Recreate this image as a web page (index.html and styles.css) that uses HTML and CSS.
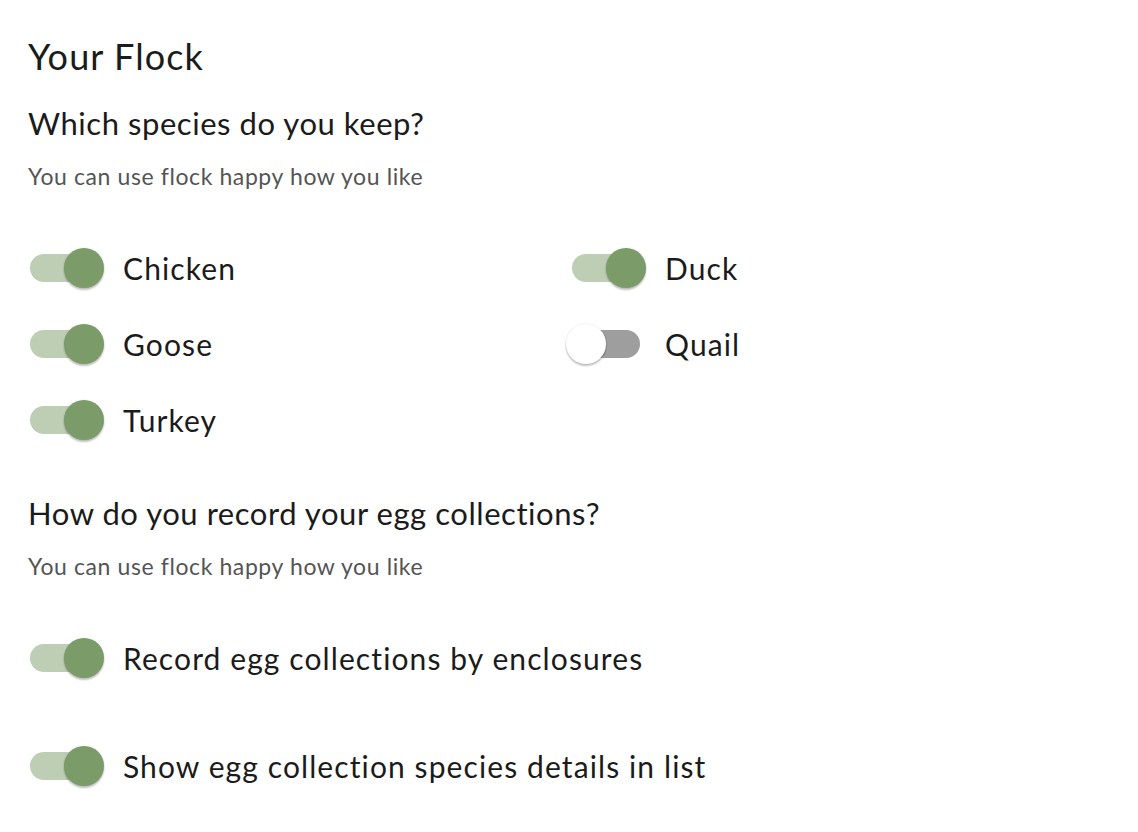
FILE: index.html
```html
<!DOCTYPE html>
<html lang="en">
<head>
<meta charset="utf-8">
<title>Your Flock</title>
<link rel="stylesheet" href="styles.css">
</head>
<body>
<main class="page">
  <h1 class="title">Your Flock</h1>

  <section class="group">
    <h2 class="question">Which species do you keep?</h2>
    <p class="hint">You can use flock happy how you like</p>
    <div class="species-grid">
      <label class="row"><span class="switch on"><span class="thumb"></span></span><span class="label">Chicken</span></label>
      <label class="row"><span class="switch on"><span class="thumb"></span></span><span class="label">Duck</span></label>
      <label class="row"><span class="switch on"><span class="thumb"></span></span><span class="label">Goose</span></label>
      <label class="row"><span class="switch"><span class="thumb"></span></span><span class="label">Quail</span></label>
      <label class="row"><span class="switch on"><span class="thumb"></span></span><span class="label">Turkey</span></label>
    </div>
  </section>

  <section class="group second">
    <h2 class="question">How do you record your egg collections?</h2>
    <p class="hint">You can use flock happy how you like</p>
    <div class="options">
      <label class="row"><span class="switch on"><span class="thumb"></span></span><span class="label">Record egg collections by enclosures</span></label>
      <label class="row"><span class="switch on"><span class="thumb"></span></span><span class="label">Show egg collection species details in list</span></label>
    </div>
  </section>
</main>
</body>
</html>
```

FILE: styles.css
```css
* { box-sizing: border-box; }

html, body {
  margin: 0;
  padding: 0;
  background: #ffffff;
}

body {
  font-family: Lato, "Open Sans", "Noto Sans", sans-serif;
  color: #1b1b1b;
}

.page {
  padding: 34px 28px 0 28px;
}

.title {
  margin: 0;
  font-size: 36px;
  line-height: 44px;
  font-weight: 400;
  letter-spacing: 1.1px;
}

.group {
  margin-top: 26px;
}

.group.second {
  margin-top: 46px;
}

.question {
  margin: 0;
  font-size: 31px;
  line-height: 38px;
  font-weight: 400;
  letter-spacing: 0.55px;
}

.hint {
  margin: 20px 0 0 0;
  font-size: 23px;
  line-height: 28px;
  letter-spacing: 0.6px;
  color: #555555;
}

.species-grid {
  margin-top: 50px;
  display: grid;
  grid-template-columns: 542px 1fr;
  row-gap: 20px;
  padding-left: 2px;
}

.options {
  margin-top: 50px;
  display: flex;
  flex-direction: column;
  gap: 52px;
  padding-left: 2px;
}

.row {
  display: flex;
  align-items: center;
  height: 56px;
}

.label {
  margin-left: 25px;
  font-size: 30px;
  line-height: 36px;
  letter-spacing: 1.1px;
  color: #1b1b1b;
}

.switch {
  position: relative;
  flex: none;
  width: 68px;
  height: 28px;
  border-radius: 14px;
  background: #9e9e9e;
}

.switch.on {
  background: #bdceb5;
}

.thumb {
  position: absolute;
  top: -6px;
  left: -6px;
  width: 40px;
  height: 40px;
  border-radius: 50%;
  background: #ffffff;
  box-shadow: 0 2px 2px rgba(0, 0, 0, 0.24), 0 0 2px rgba(0, 0, 0, 0.12);
}

.switch.on .thumb {
  left: 34px;
  background: #7b9c69;
}
```
